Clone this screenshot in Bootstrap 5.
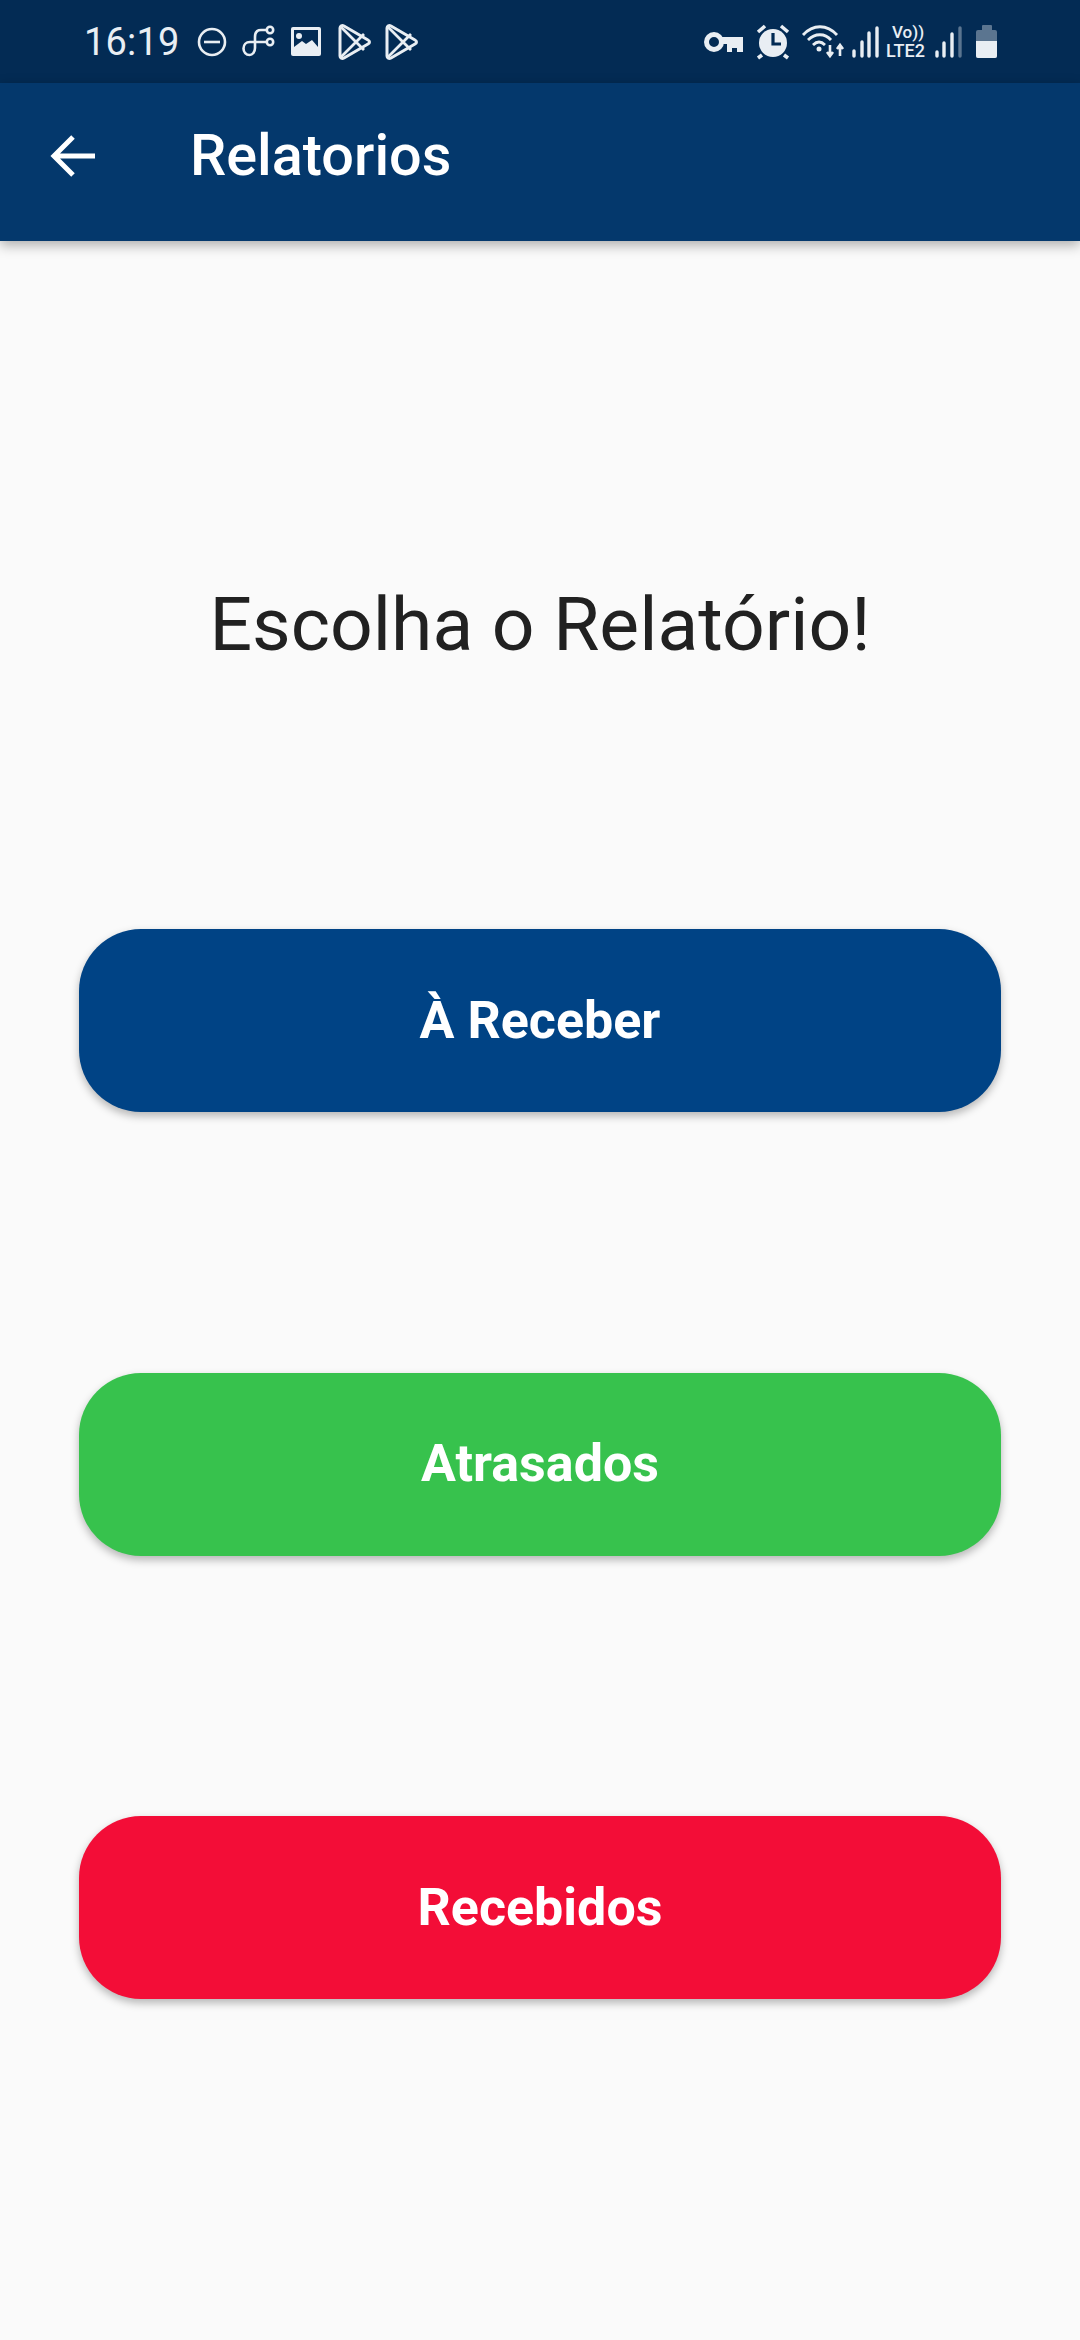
<!DOCTYPE html>
<html lang="pt">
<head>
    <meta charset="UTF-8">
    <meta name="viewport" content="width=device-width, initial-scale=1.0">
    <title>Relatorios</title>
    <link rel="stylesheet" href="https://cdn.jsdelivr.net/npm/bootstrap@5.3.0/dist/css/bootstrap.min.css">
    <style>
        html, body { height: 2340px; overflow: hidden; }
        body { background: #fafafa; font-family: Roboto, sans-serif; color: #212121; }
        .status-strip { height: 83px; background: #032b54; color: #e9eef3; padding: 0 80px 0 84px; }
        .status-time { font-size: 38px; line-height: 1; width: 106px; letter-spacing: .2px; }
        .status-art { display: block; height: 83px; }
        .app-strip { height: 158px; padding-bottom: 12px; background: #04386c; color: #fff; box-shadow: 0 4px 12px rgba(0,0,0,.32); position: relative; }
        .back-icon { margin-left: 50px; width: 46px; height: 46px; }
        .app-title { font-size: 57.6px; font-weight: 500; margin: 0 0 0 94px; line-height: 1; }
        .pick-title { font-size: 75px; font-weight: 400; line-height: 1; margin: 346px 0 0; text-align: center; }
        .report-list { margin: 267px 79px 0; gap: 260.5px; }
        .report-btn { height: 183px; width: 100%; border: 0; border-radius: 62px; color: #fff; font-size: 52px; font-weight: 700; box-shadow: 0 4px 8px rgba(0,0,0,.28); }
        .report-btn:hover, .report-btn:active { color: #fff; }
        .btn-navy, .btn-navy:hover { background: #004385 !important; }
        .btn-grass, .btn-grass:hover { background: #37c24d !important; }
        .btn-rose, .btn-rose:hover { background: #f30d37 !important; }
    </style>
</head>
<body>
    <div class="status-strip d-flex align-items-center">
        <span class="status-time">16:19</span>
        <!-- viewBox uses page coordinates so icons line up with the reference -->
        <svg class="status-art" width="240" viewBox="190 0 240 83" fill="none" stroke="#e9eef3" stroke-width="2.6">
            <circle cx="212" cy="42" r="13"/><path d="M204 42h16"/>
            <circle cx="270" cy="30" r="3.2"/><circle cx="270" cy="42" r="3.2"/>
            <path d="M266.500 30H261C257 30 255 33 255 37V48C255 52 252.500 55 249.500 55C246 55 243.500 52 243.500 48.500C243.500 45 246 42 250 42H266.500"/>
            <rect x="291" y="27" width="30" height="29" rx="2" fill="#e9eef3" stroke="none"/>
            <path d="M294 30h24v17l-6-7-6 4-4-3-8 6z" fill="#032b54" stroke="none"/>
            <circle cx="299" cy="36" r="3" fill="#e9eef3" stroke="none"/>
            <path d="M340 28c0-2 2-3 4-2l24 14c2 1 2 3 0 4l-24 14c-2 1-4 0-4-2z" stroke-width="3" stroke-linejoin="round"/>
            <path d="M341 27l15 15-15 15M356 42l8-8M356 42l8 8" stroke-width="2.800"/>
            <path d="M387 28c0-2 2-3 4-2l24 14c2 1 2 3 0 4l-24 14c-2 1-4 0-4-2z" stroke-width="3" stroke-linejoin="round"/>
            <path d="M388 27l15 15-15 15M403 42l8-8M403 42l8 8" stroke-width="2.800"/>
        </svg>
        <svg class="status-art ms-auto" width="300" viewBox="700 0 300 83" fill="none" stroke="#e9eef3" stroke-width="3.2">
            <circle cx="714" cy="42" r="7.500" stroke-width="5"/>
            <path d="M722 37h21v15h-6v-4h-5v4h-5v-8h-5z" fill="#e9eef3" stroke="none"/>
            <circle cx="773" cy="43" r="14" fill="#e9eef3" stroke="none"/><path d="M773 33v11h8" stroke="#032b54"/>
            <path d="M758 32l7-6M788 32l-7-6M762 55l-4 3M784 55l4 3" stroke-width="3.600"/>
            <path d="M803 35c10-11 24-11 34 0M808 40c7-7 17-7 23 0M813 45c4-4 8-4 12 0" stroke-width="2.800"/>
            <circle cx="819" cy="49" r="2.500" fill="#e9eef3" stroke="none"/>
            <path d="M830 45v11M827 52l3 4 3-4M840 56V45M837 49l3-4 3 4" stroke-width="2.600"/>
            <path d="M854 51v5M862 42v14M869 33v23M877 28v28" stroke-width="3.400" stroke-linecap="round"/>
            <path d="M937 52v4M944 43v13M952 34v22" stroke-width="3.400" stroke-linecap="round"/>
            <path d="M960 28v28" stroke="#5b7590" stroke-width="3.400" stroke-linecap="round"/>
            <rect x="976" y="30" width="21" height="28" rx="2" fill="#5b7590" stroke="none"/>
            <rect x="982" y="25" width="10" height="6" rx="1" fill="#5b7590" stroke="none"/>
            <path d="M976 41h21v15a2 2 0 0 1-2 2h-17a2 2 0 0 1-2-2z" fill="#e9eef3" stroke="none"/>
            <text x="892" y="38" font-family="Roboto, sans-serif" font-size="17" font-weight="500" fill="#e9eef3" stroke="none">Vo))</text>
            <text x="886" y="57" font-family="Roboto, sans-serif" font-size="18" font-weight="500" fill="#e9eef3" stroke="none">LTE2</text>
        </svg>
    </div>
    <header class="app-strip d-flex align-items-center">
        <svg class="back-icon" viewBox="0 0 46 46" fill="none" stroke="#fff" stroke-width="5">
            <path d="M45 23H5M23 4L4 23l19 19"/>
        </svg>
        <h1 class="app-title">Relatorios</h1>
    </header>
    <main>
        <h2 class="pick-title">Escolha o Relatório!</h2>
        <div class="report-list d-flex flex-column">
            <button class="btn report-btn btn-navy">À Receber</button>
            <button class="btn report-btn btn-grass">Atrasados</button>
            <button class="btn report-btn btn-rose">Recebidos</button>
        </div>
    </main>
    <script src="https://cdn.jsdelivr.net/npm/bootstrap@5.3.0/dist/js/bootstrap.bundle.min.js"></script>
</body>
</html>
